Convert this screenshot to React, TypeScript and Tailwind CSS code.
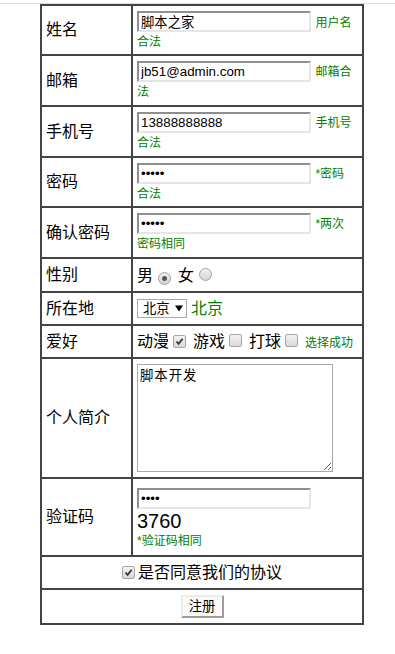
import React from "react";

const sans = "font-['Liberation_Sans','Noto_Sans_CJK_SC',sans-serif]";

function TextBox({ value, type = "text" }: { value: string; type?: string }) {
  return (
    <input
      type={type}
      readOnly
      defaultValue={value}
      className={`${sans} inline-block h-[21px] w-[174px] border-2 border-t-[#8f8f8f] border-r-[#e6e6e6] border-b-[#e6e6e6] border-l-[#8f8f8f] bg-white px-[2px] py-[1px] align-baseline text-[13.33px] leading-normal text-black outline-none`}
    />
  );
}

function Check({ checked }: { checked?: boolean }) {
  return (
    <span className="inline-flex h-[13px] w-[13px] shrink-0 items-center justify-center rounded-[2px] border border-[#a6a6a6] bg-linear-to-b from-[#f3f3f3] to-[#d9d9d9]">
      {checked && (
        <svg viewBox="0 0 11 11" className="h-[11px] w-[11px]">
          <path d="M2.5 5.5 L4.6 7.8 L8.6 2.8" stroke="#333" strokeWidth="1.8" fill="none" />
        </svg>
      )}
    </span>
  );
}

function Radio({ checked }: { checked?: boolean }) {
  return (
    <span className="inline-flex h-[13px] w-[13px] shrink-0 items-center justify-center rounded-full border border-[#a3a3a3] bg-linear-to-b from-[#f0f0f0] to-[#d6d6d6]">
      {checked && <span className="h-[5px] w-[5px] rounded-full bg-[#555]" />}
    </span>
  );
}

function Hint({ children }: { children: React.ReactNode }) {
  return <span className="text-xs leading-4 text-[#008000]">{children}</span>;
}

const label = "border border-[#444] pl-[4px] align-middle text-base leading-[18px]";
const field = "border border-[#444] pl-[4px] pr-[6px] align-middle text-base leading-[18px]";

export default function App() {
  return (
    <div className={`${sans} min-h-[654px] bg-white pt-[3px] text-black`}>
      <div className="border-t border-[#e0e0e0]">
        <table className="ml-10 w-[324px] border-separate border-spacing-0 border border-[#444]">
          <tbody>
            <tr>
              <td className={`${label} h-[50px] w-[91px]`}>姓名</td>
              <td className={field}>
                <TextBox value="脚本之家" /> <Hint>用户名合法</Hint>
              </td>
            </tr>
            <tr>
              <td className={`${label} h-[51px]`}>邮箱</td>
              <td className={field}>
                <TextBox value="jb51@admin.com" /> <Hint>邮箱合法</Hint>
              </td>
            </tr>
            <tr>
              <td className={`${label} h-[51px]`}>手机号</td>
              <td className={field}>
                <TextBox value="13888888888" /> <Hint>手机号合法</Hint>
              </td>
            </tr>
            <tr>
              <td className={`${label} h-[50px]`}>密码</td>
              <td className={field}>
                <TextBox value="12345" type="password" /> <Hint>*密码合法</Hint>
              </td>
            </tr>
            <tr>
              <td className={`${label} h-[51px]`}>确认密码</td>
              <td className={field}>
                <TextBox value="12345" type="password" /> <Hint>*两次密码相同</Hint>
              </td>
            </tr>
            <tr>
              <td className={`${label} h-[34px]`}>性别</td>
              <td className={field}>
                <div className="flex items-center pt-[1px]">
                  <span>男</span>
                  <span className="ml-[5px] mr-[3px]">
                    <Radio checked />
                  </span>
                  <span className="ml-[4px]">女</span>
                  <span className="ml-[5px] mr-[3px]">
                    <Radio />
                  </span>
                </div>
              </td>
            </tr>
            <tr>
              <td className={`${label} h-[33px]`}>所在地</td>
              <td className={field}>
                <div className="flex items-center">
                  <span className="inline-flex h-[19px] w-[50px] items-center justify-between border border-[#a9a9a9] bg-white pr-[3px] pl-[5px] text-[13.33px]">
                    北京
                    <svg width="8" height="7" viewBox="0 0 8 7">
                      <path d="M0 0.5H8L4 6.5Z" fill="#000" />
                    </svg>
                  </span>
                  <span className="ml-[4px] text-[#008000]">北京</span>
                </div>
              </td>
            </tr>
            <tr>
              <td className={`${label} h-[33px]`}>爱好</td>
              <td className={field}>
                <div className="flex items-center">
                  <span>动漫</span>
                  <span className="ml-[4px] mr-[3px]">
                    <Check checked />
                  </span>
                  <span className="ml-[4px]">游戏</span>
                  <span className="ml-[4px] mr-[3px]">
                    <Check />
                  </span>
                  <span className="ml-[4px]">打球</span>
                  <span className="ml-[4px] mr-[3px]">
                    <Check />
                  </span>
                  <span className="ml-[4px]">
                    <Hint>选择成功</Hint>
                  </span>
                </div>
              </td>
            </tr>
            <tr>
              <td className={`${label} h-[120px]`}>个人简介</td>
              <td className={field}>
                <textarea
                  readOnly
                  defaultValue="脚本开发"
                  className="block h-[108px] w-[196px] border border-[#a9a9a9] bg-white px-[2px] py-[2px] font-['Liberation_Mono','Noto_Sans_CJK_SC',monospace] text-[13.33px] leading-normal tracking-[1px] outline-none"
                />
              </td>
            </tr>
            <tr>
              <td className={`${label} h-[78px]`}>验证码</td>
              <td className={field}>
                <div className="flex flex-col items-start pt-[2px]">
                  <TextBox value="1234" type="password" />
                  <div className="text-[20px] leading-[24px]">3760</div>
                  <Hint>*验证码相同</Hint>
                </div>
              </td>
            </tr>
            <tr>
              <td colSpan={2} className="h-[33px] border border-[#444] align-middle text-base leading-[18px]">
                <div className="flex items-center justify-center">
                  <span className="mr-[3px]">
                    <Check checked />
                  </span>
                  <span>是否同意我们的协议</span>
                </div>
              </td>
            </tr>
            <tr>
              <td colSpan={2} className="h-[35px] border border-[#444] align-middle">
                <div className="flex justify-center">
                  <button className="h-[23px] w-[43px] border-2 border-t-[#ececec] border-r-[#9c9c9c] border-b-[#9c9c9c] border-l-[#ececec] bg-[#fafafa] text-[13.33px] leading-none text-black">
                    注册
                  </button>
                </div>
              </td>
            </tr>
          </tbody>
        </table>
      </div>
    </div>
  );
}
